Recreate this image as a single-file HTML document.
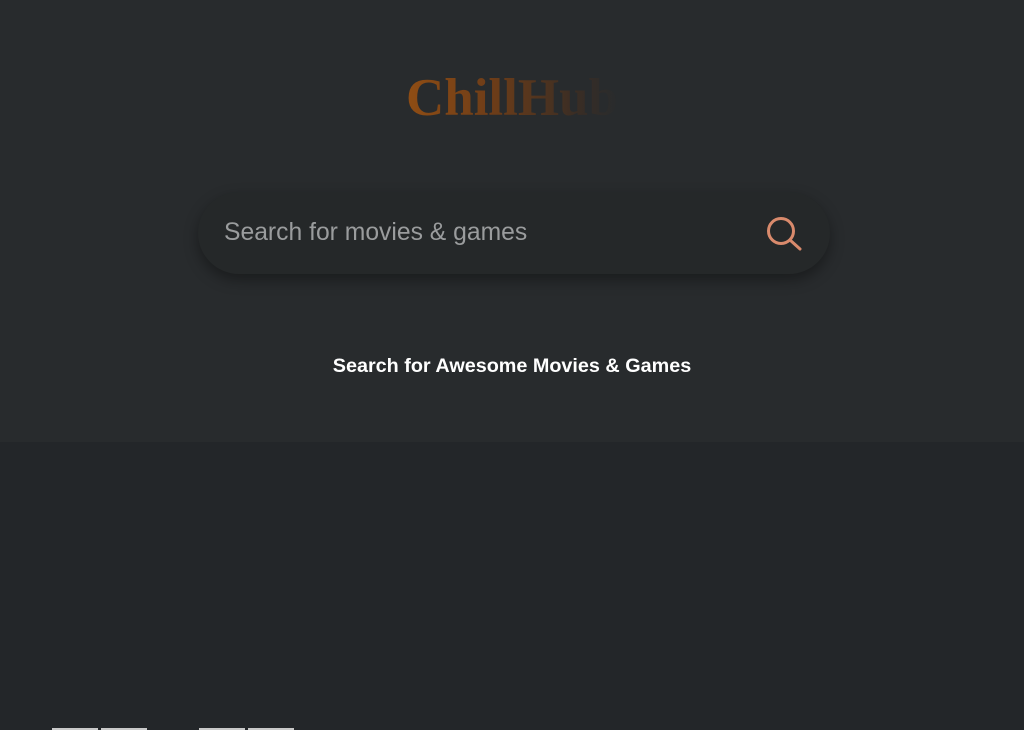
<!DOCTYPE html>
<html><head><meta charset="utf-8"><style>
html,body{margin:0;padding:0;width:1024px;height:730px;overflow:hidden;background:#232629;font-family:"Liberation Sans",sans-serif}
.top{position:absolute;left:0;top:0;width:1024px;height:442px;background:#282b2d}
.logo{position:absolute;left:0;width:1024px;top:68px;text-align:center;font-family:"Liberation Serif",serif;font-weight:bold;font-size:53px;letter-spacing:0px}
.logo span{background:linear-gradient(90deg,#8f4d14 0%,#6e3d18 40%,#3a2d24 80%,#282b2d 100%);-webkit-background-clip:text;background-clip:text;color:transparent}
.bar{position:absolute;left:198px;top:192px;width:632px;height:82px;border-radius:41px;background:#252829;box-shadow:0 6px 14px rgba(0,0,0,.35)}
.ph{position:absolute;left:26px;top:27px;font-size:24.7px;color:#9a9c9d}
.icon{position:absolute;left:566px;top:22px}
.sub{position:absolute;left:0;width:1024px;top:355px;text-align:center;color:#fff;font-weight:bold;font-size:19.8px}
.b{position:absolute;top:728px;height:2px;width:46px;background:#c9c9c9}
</style></head><body>
<div class="top">
<div class="logo"><span>ChillHub</span></div>
<div class="bar"><div class="ph">Search for movies &amp; games</div>
<svg class="icon" width="42" height="40" viewBox="0 0 42 40"><circle cx="17" cy="17" r="12.5" fill="none" stroke="#d98a6c" stroke-width="3"/><line x1="26" y1="26" x2="36" y2="35" stroke="#d98a6c" stroke-width="3" stroke-linecap="round"/></svg>
</div>
<div class="sub">Search for Awesome Movies &amp; Games</div>
</div>
<div class="b" style="left:52px"></div><div class="b" style="left:101px"></div>
<div class="b" style="left:199px"></div><div class="b" style="left:248px"></div>
</body></html>
